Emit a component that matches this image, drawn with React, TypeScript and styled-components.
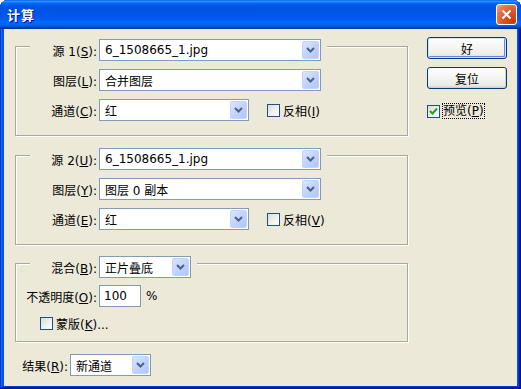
import React from 'react';
import styled, { createGlobalStyle } from 'styled-components';

const FONT = `"DejaVu Sans", "Noto Sans CJK SC", sans-serif`;

const Global = createGlobalStyle`
  html, body { margin: 0; padding: 0; background: #ffffff; }
  body { width: 521px; height: 389px; overflow: hidden; }
`;

const Window = styled.div`
  width: 521px;
  height: 389px;
  box-sizing: border-box;
  display: flex;
  flex-direction: column;
  background: #0855dd;
  border-radius: 8px 8px 0 0;
  overflow: hidden;
  box-shadow: inset -1px -1px #00138c, inset 1px 1px #0831d9, inset -2px -2px #001ea0,
    inset 2px 2px #166aee, inset -3px -3px #003bda, inset 3px 3px #0855dd;
  font-family: ${FONT};
  font-size: 12px;
  color: #000;
`;

const TitleBar = styled.div`
  height: 29px;
  flex: none;
  display: flex;
  align-items: center;
  justify-content: space-between;
  padding: 0 4px 0 7px;
  background: linear-gradient(
    to bottom,
    #0058ee 0%,
    #3593ff 4%,
    #288eff 6%,
    #127dff 8%,
    #036ffc 10%,
    #0262ee 14%,
    #0057e5 20%,
    #0054e3 24%,
    #0055eb 56%,
    #005bf5 66%,
    #026afe 76%,
    #0062ef 86%,
    #0052d6 92%,
    #0040ab 94%,
    #003092 100%
  );
`;

const Title = styled.span`
  color: #fff;
  font-weight: bold;
  font-size: 13px;
  letter-spacing: 1px;
  text-shadow: 1px 1px #0f1089;
`;

const CloseBtn = styled.div`
  width: 21px;
  height: 21px;
  box-sizing: border-box;
  border: 1px solid #fff;
  border-radius: 3px;
  background: radial-gradient(circle at 85% 85%, #c43c10 0%, #d9582a 45%, #e5724a 70%, #f3a58a 100%);
  display: flex;
  align-items: center;
  justify-content: center;
`;

const Client = styled.div`
  flex: 1;
  margin: 0 4px 3px 4px;
  background: #ece9d8;
  display: flex;
  padding: 0 10px 0 11px;
  gap: 19px;
`;

const LeftCol = styled.div`
  width: 393px;
  display: flex;
  flex-direction: column;
`;

const RightCol = styled.div`
  width: 80px;
  padding-top: 8px;
  display: flex;
  flex-direction: column;
`;

const Group = styled.div<{ $top: number; $pb: number }>`
  margin-top: ${(p) => p.$top}px;
  border: 1px solid #aca899;
  box-shadow: inset 1px 1px 0 #fff, 1px 1px 0 #fff;
  padding-bottom: ${(p) => p.$pb}px;
  display: flex;
  flex-direction: column;
  align-items: flex-start;
`;

const Row = styled.div<{ $mt: number; $ml: number; $head?: boolean }>`
  display: flex;
  align-items: center;
  height: 22px;
  margin-top: ${(p) => p.$mt}px;
  margin-left: ${(p) => p.$ml}px;
  padding-right: ${(p) => (p.$head ? 6 : 0)}px;
  background: ${(p) => (p.$head ? '#ece9d8' : 'transparent')};
`;

const Label = styled.span<{ $w: number }>`
  width: ${(p) => p.$w}px;
  text-align: right;
  margin-right: 2px;
  white-space: nowrap;
`;

const U = styled.span`
  text-decoration: underline;
`;

const Combo = styled.div<{ $w: number }>`
  width: ${(p) => p.$w}px;
  height: 22px;
  box-sizing: border-box;
  border: 1px solid #7f9db9;
  background: #fff;
  display: flex;
  align-items: center;
`;

const ComboText = styled.span`
  flex: 1;
  padding-left: 5px;
  white-space: nowrap;
  overflow: hidden;
`;

const DropBtn = styled.span`
  width: 17px;
  height: 18px;
  margin: 1px;
  box-sizing: border-box;
  border: 1px solid #c3d3fd;
  border-radius: 2px;
  background: linear-gradient(135deg, #dbe6fe 0%, #c2d3fc 50%, #b0c6f6 100%);
  display: flex;
  align-items: center;
  justify-content: center;
`;

const TextBox = styled.div<{ $w: number }>`
  width: ${(p) => p.$w}px;
  height: 22px;
  box-sizing: border-box;
  border: 1px solid #7f9db9;
  background: #fff;
  padding-left: 4px;
  display: flex;
  align-items: center;
`;

const Percent = styled.span`
  margin-left: 5px;
`;

const Check = styled.label<{ $ml: number }>`
  display: flex;
  align-items: center;
  margin-left: ${(p) => p.$ml}px;
  gap: 3px;
  white-space: nowrap;
`;

const Box = styled.span`
  width: 13px;
  height: 13px;
  box-sizing: border-box;
  border: 1px solid #1c5180;
  background: linear-gradient(135deg, #dcdcd7 0%, #f2f2ee 60%, #ffffff 100%);
  display: flex;
  align-items: center;
  justify-content: center;
  flex: none;
`;

const Focus = styled.span`
  outline: 1px dotted #000;
  outline-offset: 0px;
  line-height: 14px;
`;

const Button = styled.div<{ $def?: boolean; $mt: number }>`
  margin-top: ${(p) => p.$mt}px;
  height: 22px;
  box-sizing: border-box;
  border: 1px solid #003c74;
  border-radius: 3px;
  background: linear-gradient(to bottom, #ffffff 0%, #f4f4f0 50%, #ecebe6 85%, #d6d0c5 100%);
  box-shadow: ${(p) =>
    p.$def
      ? 'inset 0 0 0 1px #cee7ff, inset -1px -1px 0 1px #6982ee'
      : 'inset -1px -1px 0 0 #d6d0c5'};
  display: flex;
  align-items: center;
  justify-content: center;
`;

const Preview = styled(Check)`
  margin-top: 15px;
`;

const Chevron = () => (
  <svg width="9" height="6" viewBox="0 0 9 6">
    <path d="M1 1 L4.5 4.5 L8 1" fill="none" stroke="#4d6185" strokeWidth="2" />
  </svg>
);

const Select = ({ w, value }: { w: number; value: string }) => (
  <Combo $w={w}>
    <ComboText>{value}</ComboText>
    <DropBtn>
      <Chevron />
    </DropBtn>
  </Combo>
);

const CheckBox = ({ checked }: { checked?: boolean }) => (
  <Box>
    {checked && (
      <svg width="9" height="9" viewBox="0 0 9 9">
        <path d="M1 4 L3.5 6.5 L8 1.5" fill="none" stroke="#21a121" strokeWidth="2" />
      </svg>
    )}
  </Box>
);

const SourceGroup = ({
  top,
  n,
  k1,
  k2,
  k3,
  k4,
  layer,
}: {
  top: number;
  n: string;
  k1: string;
  k2: string;
  k3: string;
  k4: string;
  layer: string;
}) => (
  <Group $top={top} $pb={14}>
    <Row $mt={-8} $ml={14} $head>
      <Label $w={67}>
        源 {n}(<U>{k1}</U>):
      </Label>
      <Select w={222} value="6_1508665_1.jpg" />
    </Row>
    <Row $mt={8} $ml={4}>
      <Label $w={77}>
        图层(<U>{k2}</U>):
      </Label>
      <Select w={222} value={layer} />
    </Row>
    <Row $mt={8} $ml={4}>
      <Label $w={77}>
        通道(<U>{k3}</U>):
      </Label>
      <Select w={150} value="红" />
      <Check $ml={18}>
        <CheckBox />
        <span>
          反相(<U>{k4}</U>)
        </span>
      </Check>
    </Row>
  </Group>
);

export default function App() {
  return (
    <>
      <Global />
      <Window>
        <TitleBar>
          <Title>计算</Title>
          <CloseBtn>
            <svg width="11" height="11" viewBox="0 0 11 11">
              <path d="M1.5 1.5 L9.5 9.5 M9.5 1.5 L1.5 9.5" stroke="#fff" strokeWidth="2" />
            </svg>
          </CloseBtn>
        </TitleBar>
        <Client>
          <LeftCol>
            <SourceGroup top={17} n="1" k1="S" k2="L" k3="C" k4="I" layer="合并图层" />
            <SourceGroup top={19} n="2" k1="U" k2="Y" k3="E" k4="V" layer="图层 0 副本" />
            <Group $top={18} $pb={7}>
              <Row $mt={-8} $ml={14} $head>
                <Label $w={67}>
                  混合(<U>B</U>):
                </Label>
                <Select w={92} value="正片叠底" />
              </Row>
              <Row $mt={7} $ml={4}>
                <Label $w={77}>
                  不透明度(<U>O</U>):
                </Label>
                <TextBox $w={42}>100</TextBox>
                <Percent>%</Percent>
              </Row>
              <Row $mt={5} $ml={24}>
                <Check $ml={0}>
                  <CheckBox />
                  <span>
                    蒙版(<U>K</U>)...
                  </span>
                </Check>
              </Row>
            </Group>
            <Row $mt={12} $ml={5}>
              <Label $w={48}>
                结果(<U>R</U>):
              </Label>
              <Select w={81} value="新通道" />
            </Row>
          </LeftCol>
          <RightCol>
            <Button $def $mt={0}>
              好
            </Button>
            <Button $mt={8}>复位</Button>
            <Preview $ml={0}>
              <CheckBox checked />
              <Focus>
                预览(<U>P</U>)
              </Focus>
            </Preview>
          </RightCol>
        </Client>
      </Window>
    </>
  );
}
